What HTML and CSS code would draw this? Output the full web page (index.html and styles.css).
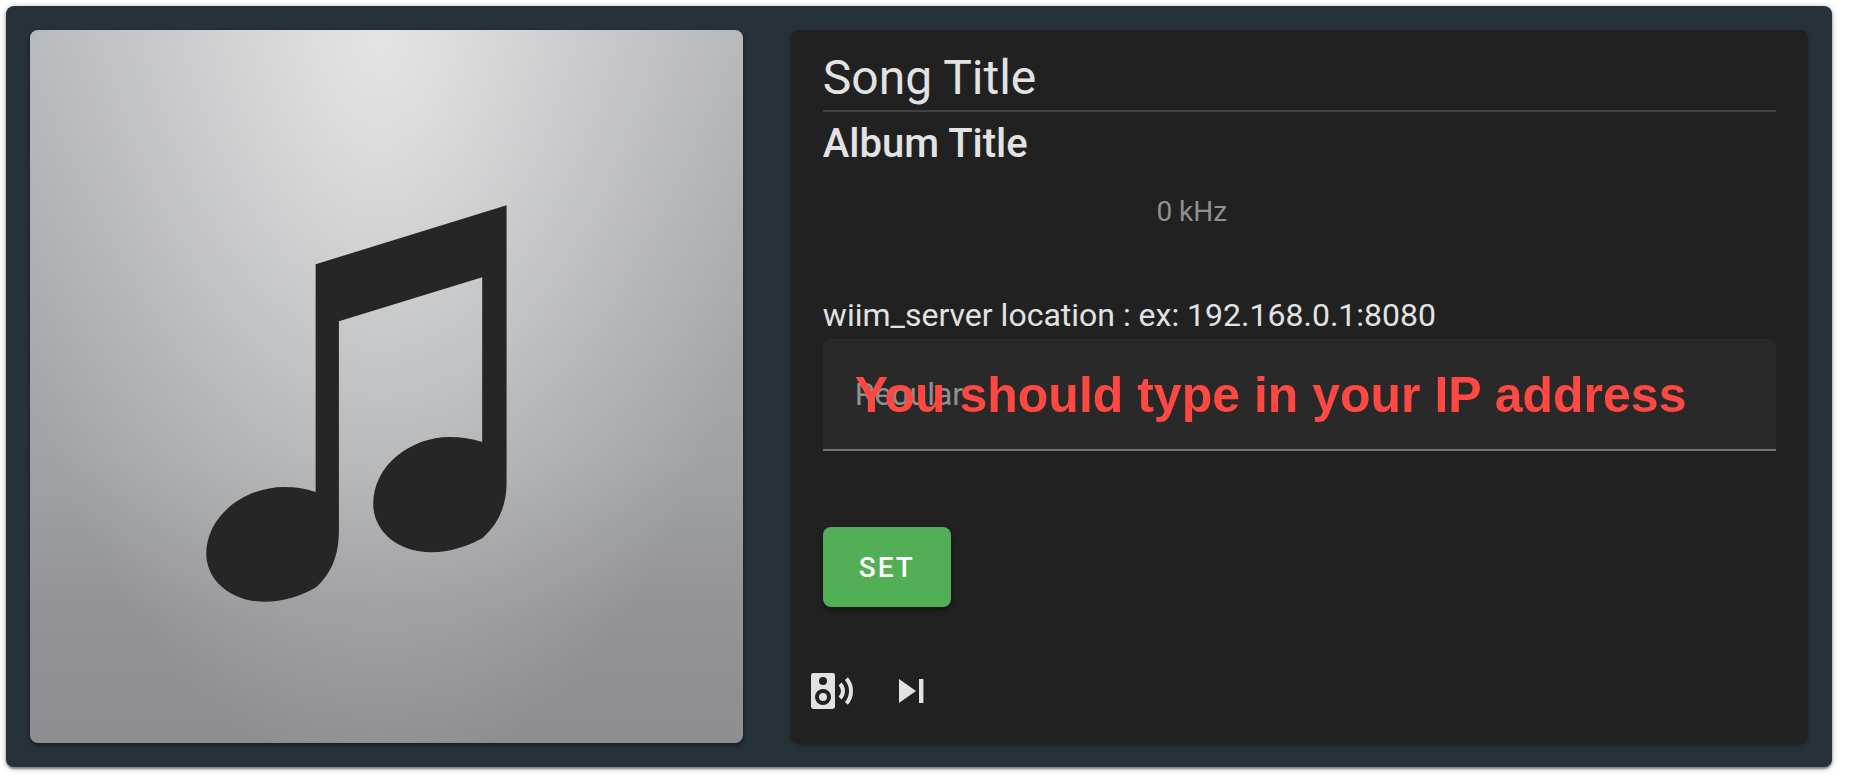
FILE: index.html
```html
<!DOCTYPE html>
<html lang="en">
<head>
<meta charset="utf-8">
<title>Now playing</title>
<link rel="stylesheet" href="styles.css">
</head>
<body>
<main class="sheet">
  <div class="col">
    <div class="cover">
      <svg class="cover-note" viewBox="0 0 713 713" role="img" aria-label="Music note">
        <path d="M285.7 234.3L476.7 175.3V455C476 477 468 495 452.3 508.3C437 516.500 420 522.300 401.700 522.300C366 522.300 343.300 500 343.300 474C343.300 436 380 407 420 407C431 407 442 408.500 452.300 412V247.300L309 291.300V500C309 525 302 543 285.700 557.700C270 566.500 253 572 235 572C199 572 176.300 549 176.300 524C176.300 487 213 457 255 457C266 457 276 458.500 285.700 462Z"/>
      </svg>
    </div>
  </div>
  <div class="col">
    <section class="card">
      <h1 class="song">Song Title</h1>
      <h2 class="album">Album Title</h2>
      <p class="rate">0 kHz</p>
      <form class="server">
        <label class="server-label" for="server">wiim_server location : ex: 192.168.0.1:8080</label>
        <div class="field">
          <input class="field-input" id="server" type="text" placeholder="Regular">
          <span class="field-note">You should type in your IP address</span>
        </div>
        <button class="set" type="button">SET</button>
      </form>
      <div class="actions">
        <button class="action" type="button" aria-label="Speaker">
          <svg class="icon" viewBox="0 0 24 24"><path d="M12 3H3.200A1.200 1.200 0 0 0 2 4.200v15.600A1.200 1.200 0 0 0 3.200 21h9.600a1.200 1.200 0 0 0 1.200-1.200V4.200A1.200 1.200 0 0 0 12.800 3ZM8 5a2 2 0 1 1 0 4 2 2 0 0 1 0-4Zm0 6a4 4 0 1 1 0 8 4 4 0 0 1 0-8Zm0 2a2 2 0 1 0 0 4 2 2 0 0 0 0-4Z"/><path class="wave" d="M16.500 8.500a4.900 4.900 0 0 1 0 7M19.700 5.800a9.500 9.500 0 0 1 0 12.400"/></svg>
        </button>
        <button class="action" type="button" aria-label="Next track">
          <svg class="icon" viewBox="0 0 24 24"><path d="M6 18l8.500-6L6 6v12ZM16 6v12h2.200V6h-2.200Z"/></svg>
        </button>
      </div>
    </section>
  </div>
</main>
</body>
</html>
```
FILE: styles.css
```css
* { box-sizing: border-box; }

body {
  margin: 0;
  padding: 6px 18px 16px 6px;
  background: #fff;
  color: #e2e2e2;
  font-family: Roboto, "Liberation Sans", sans-serif;
}

.sheet {
  display: grid;
  grid-template-columns: minmax(0, 5fr) minmax(0, 7fr);
  background: #263238;
  border-radius: 8px;
  box-shadow: 0 2px 2px rgba(0, 0, 0, .4), 0 1px 6px rgba(0, 0, 0, .3);
}

.col {
  display: flex;
  padding: 24px;
}

.cover {
  flex: 1;
  aspect-ratio: 1;
  border-radius: 8px;
  background:
    radial-gradient(ellipse 56% 105% at 49% 0, rgba(255, 255, 255, .64), rgba(255, 255, 255, .56) 15%, rgba(255, 255, 255, .38) 40%, rgba(255, 255, 255, .16) 72%, transparent),
    linear-gradient(#b4b5b7, #a0a2a4 60%, #939397 82%, #8e8e92);
  box-shadow: 0 2px 4px rgba(0, 0, 0, .5);
}

.cover-note {
  display: block;
  width: 100%;
  fill: #262626;
}

.card {
  flex: 1;
  display: flex;
  flex-direction: column;
  padding: 20px 32px;
  background: #212121;
  border-radius: 8px;
  box-shadow: 0 2px 4px rgba(0, 0, 0, .3);
}

.song {
  margin: 0;
  padding-bottom: 4px;
  border-bottom: 2px solid #424242;
  font-size: 48px;
  font-weight: 400;
  line-height: 56px;
}

.album {
  margin: 0;
  font-size: 40px;
  font-weight: 500;
  line-height: 64px;
}

.rate {
  margin: 0;
  padding: 16px 0 0 35%;
  color: #909090;
  font-size: 28px;
  line-height: 40px;
}

.server { margin-top: 61px; }

.server-label {
  display: block;
  padding-bottom: 2px;
  font-size: 32px;
  line-height: 44px;
}

.field { position: relative; }

.field-input {
  display: block;
  width: 100%;
  height: 112px;
  padding: 0 32px;
  border: 0;
  border-bottom: 2px solid #757575;
  border-radius: 8px 8px 0 0;
  background: #292929;
  color: inherit;
  font: inherit;
  font-size: 32px;
}

.field-input::placeholder {
  color: #909090;
  opacity: 1;
}

.field-note {
  position: absolute;
  inset: 0 32px;
  color: #ff4842;
  font-family: "Liberation Sans", sans-serif;
  font-size: 50px;
  font-weight: 700;
  line-height: 112px;
  white-space: nowrap;
  pointer-events: none;
}

.set {
  height: 80px;
  margin-top: 76px;
  padding: 0 36px;
  border: 0;
  border-radius: 8px;
  background: #52af55;
  color: #fff;
  font: inherit;
  font-size: 28px;
  font-weight: 500;
  letter-spacing: 2px;
  box-shadow: 0 3px 4px rgba(0, 0, 0, .4);
}

.actions {
  display: flex;
  gap: 32px;
  margin: 60px 0 0 -16px;
}

.action {
  padding: 0;
  border: 0;
  background: none;
}

.icon {
  display: block;
  width: 48px;
  height: 48px;
  fill: #e2e2e2;
}

.wave {
  fill: none;
  stroke: #e2e2e2;
  stroke-width: 2;
}
```
